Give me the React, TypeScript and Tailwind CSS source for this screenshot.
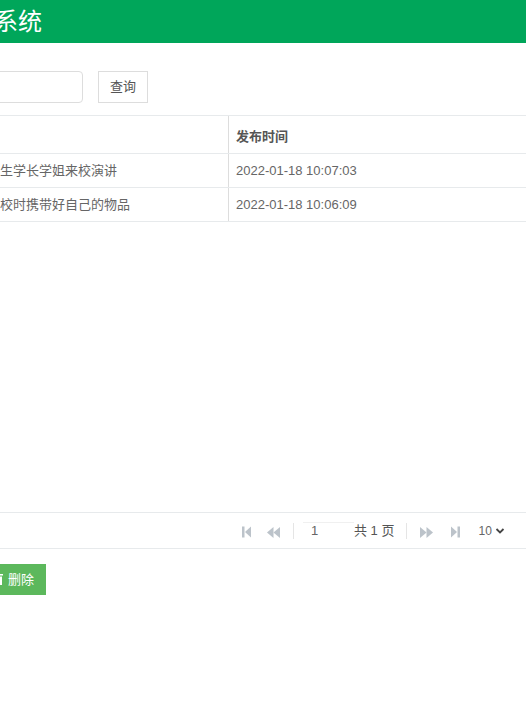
const font = { fontFamily: '"Liberation Sans", "Noto Sans CJK SC", sans-serif' };

function FirstIcon() {
  return (
    <svg width="9" height="12" viewBox="0 0 9 12" fill="#bcc3ca">
      <rect x="0" y="0.5" width="2.5" height="11" />
      <path d="M9 0.5v11L3 6z" />
    </svg>
  );
}

function PrevIcon() {
  return (
    <svg width="13" height="11" viewBox="0 0 13 11" fill="#bcc3ca">
      <path d="M6.5 0v11L0 5.500z" />
      <path d="M13 0v11L6.500 5.500z" />
    </svg>
  );
}

function NextIcon() {
  return (
    <svg width="13" height="11" viewBox="0 0 13 11" fill="#bcc3ca">
      <path d="M0 0v11l6.500-5.500z" />
      <path d="M6.500 0v11L13 5.500z" />
    </svg>
  );
}

function LastIcon() {
  return (
    <svg width="9" height="12" viewBox="0 0 9 12" fill="#bcc3ca">
      <path d="M0 0.500v11L6 6z" />
      <rect x="6.500" y="0.500" width="2.500" height="11" />
    </svg>
  );
}

const rows = [
  { title: "生学长学姐来校演讲", time: "2022-01-18 10:07:03" },
  { title: "校时携带好自己的物品", time: "2022-01-18 10:06:09" },
];

export default function App() {
  return (
    <div className="h-[702px] w-[526px] overflow-hidden bg-white" style={font}>
      {/* header, cut off on the left like the page scrolled sideways */}
      <div className="flex h-[43px] items-center bg-[#00a65a]">
        <h1 className="-ml-[6px] text-[24px] leading-none font-normal whitespace-nowrap text-white">
          系统
        </h1>
      </div>

      {/* search */}
      <div className="flex h-[72px] items-start gap-[15px] pt-[28px]">
        <input className="-ml-[6px] h-[32px] w-[89px] rounded-[4px] border border-[#ddd] bg-white" />
        <button className="h-[32px] w-[50px] border border-[#ddd] bg-white text-[13px] text-[#555]">
          查询
        </button>
      </div>

      {/* table */}
      <div className="h-[398px] border-b border-[#e7eaec]">
        <div className="flex h-[39px] border-t border-b border-[#e7eaec]">
          <div className="w-[229px] border-r border-[#ddd]" />
          <div className="flex items-end pb-[7px] pl-[7px] text-[13px] font-bold text-[#555]">
            发布时间
          </div>
        </div>
        {rows.map((row) => (
          <div
            key={row.time}
            className="flex h-[34px] border-b border-[#e7eaec] text-[13px] text-[#666]"
          >
            <div className="flex w-[229px] items-center overflow-hidden border-r border-[#ddd] whitespace-nowrap">
              {row.title}
            </div>
            <div className="flex items-center pl-[7px]">{row.time}</div>
          </div>
        ))}
      </div>

      {/* pager */}
      <div className="flex h-[36px] items-center border-b border-[#e7eaec] pl-[242px] text-[13px] text-[#555]">
        <span className="mt-[3px] flex">
          <FirstIcon />
        </span>
        <span className="mt-[3px] ml-[16px] flex">
          <PrevIcon />
        </span>
        <span className="ml-[13px] h-[16px] w-px bg-[#e5e5e5]" />
        <span className="ml-[9px] h-[18px] w-[51px] border-t border-[#f0f0f0] pl-[8px] leading-[15px] text-[#666]">
          1
        </span>
        <span className="whitespace-nowrap">共 1 页</span>
        <span className="ml-[12px] h-[16px] w-px bg-[#e5e5e5]" />
        <span className="mt-[3px] ml-[13px] flex">
          <NextIcon />
        </span>
        <span className="mt-[3px] ml-[18px] flex">
          <LastIcon />
        </span>
        <span className="ml-[18px] flex items-center gap-[3px] text-[12px] text-[#666]">
          10
          <svg width="10" height="6" viewBox="0 0 10 6" fill="none" stroke="#444" strokeWidth="1.800">
            <path d="M1.500 1l3.500 3.500 3.500-3.500" />
          </svg>
        </span>
      </div>

      {/* actions */}
      <div className="pt-[15px]">
        <button className="flex h-[31px] w-[46px] items-center justify-end gap-[5px] overflow-hidden bg-[#5cb85c] pr-[12px] text-[13px] whitespace-nowrap text-white">
          <svg className="shrink-0" width="3" height="11" viewBox="8 0 3 11" fill="#fff">
            <path d="M8 0h3v1.500H8zM8 2.500h2v8.500H8z" />
          </svg>
          删除
        </button>
      </div>
    </div>
  );
}
